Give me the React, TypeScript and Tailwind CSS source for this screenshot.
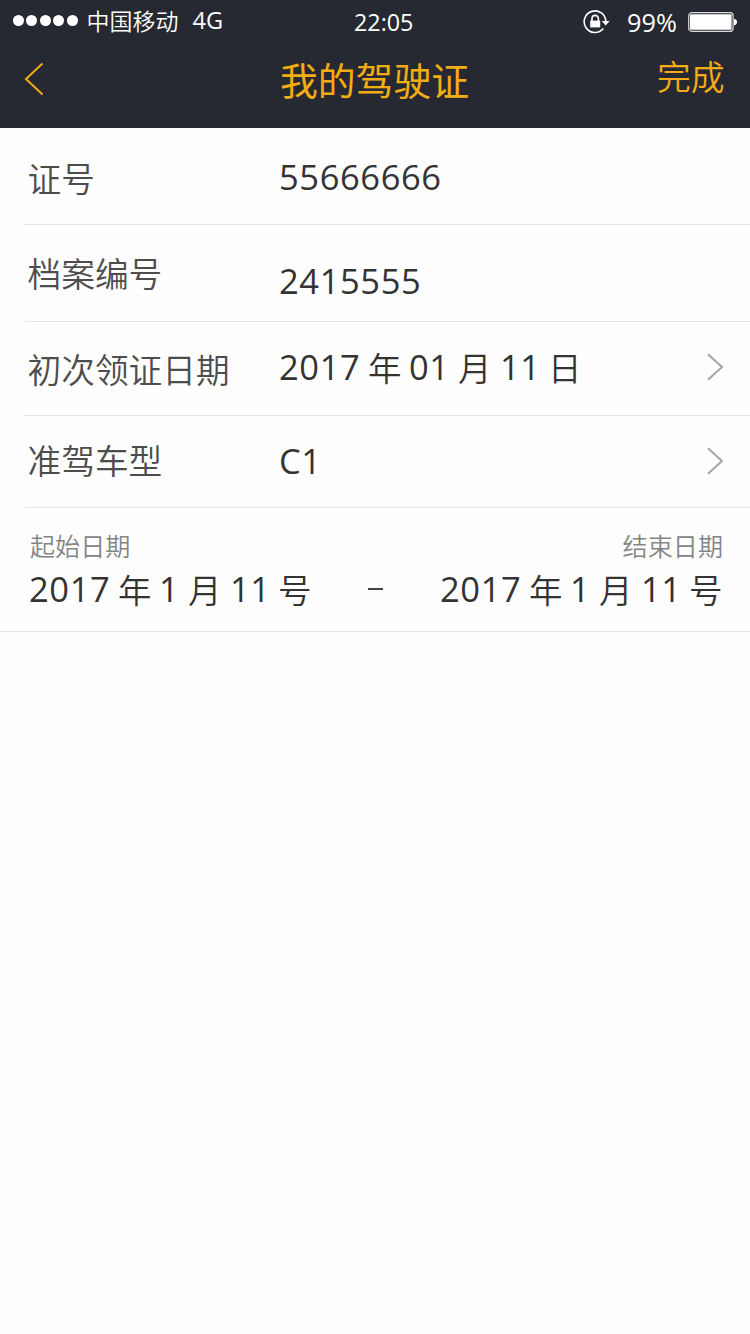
import type { ReactNode } from "react";

const latin = "font-['Open_Sans','Noto_Sans_CJK_SC',sans-serif] font-[370]";
const hanzi = "font-['Noto_Sans_CJK_SC',sans-serif] font-[350]";

function Chevron() {
  return (
    <svg className="ml-auto mr-[26px] h-7 w-[18px]" viewBox="0 0 18 28" fill="none" stroke="#a5a5a5" strokeWidth="2">
      <path d="M2 1.2 16 14 2 26.8" />
    </svg>
  );
}

type RowProps = { label: string; height: string; labelPad: string; valuePad: string; chevronPad?: string; children: ReactNode };

function Row({ label, height, labelPad, valuePad, chevronPad, children }: RowProps) {
  return (
    <div className={`ml-[25px] flex items-start border-b border-[#e3e3e3] ${height}`}>
      <div className={`w-[254px] pl-[2.5px] text-[33.7px] leading-[40px] text-[#4d4d4d] ${hanzi} ${labelPad}`}>{label}</div>
      <div className={`flex text-[34.5px] leading-[40px] tracking-[0.6px] text-[#333] ${latin} ${valuePad}`}>{children}</div>
      {chevronPad && <div className={`ml-auto ${chevronPad}`}><Chevron /></div>}
    </div>
  );
}

function Zh({ children, width }: { children: string; width: string }) {
  return <span className={`text-[33.5px] tracking-normal ${hanzi} ${width}`}>{children}</span>;
}

function PeriodDate() {
  return (
    <div className={`flex text-[34.5px] leading-[40px] tracking-[0.6px] text-[#333] ${latin}`}>
      <span className="w-[89px]">2017</span>
      <Zh width="w-[41px]">年</Zh>
      <span className="w-[29px]">1</span>
      <Zh width="w-[42px]">月</Zh>
      <span className="w-[48px]">11</span>
      <Zh width="w-[34px]">号</Zh>
    </div>
  );
}

export default function App() {
  return (
    <div className="flex h-[1334px] w-[750px] flex-col overflow-hidden bg-[#fefefe]">
      <header className="h-32 bg-[#272932]">
        <div className={`flex h-11 items-center text-white ${latin}`}>
          <div className="flex w-[354px] items-center pb-[4px]">
            <div className="ml-[13px] flex gap-[2.4px]">
              {[0, 1, 2, 3, 4].map((n) => (
                <span key={n} className="size-[11px] rounded-full bg-white" />
              ))}
            </div>
            <span className={`ml-[9px] text-[23px] leading-7 ${hanzi}`}>中国移动</span>
            <span className="ml-[14px] text-[23.5px] leading-7">4G</span>
          </div>
          <span className="w-[229px] text-[23.3px] leading-7">22:05</span>
          <svg className="mb-px h-6 w-7" viewBox="0 0 28 24" fill="none" stroke="white" strokeWidth="1.6">
            <path d="M20.3 18.6A10.8 10.8 0 1 1 22.8 11.5" />
            <path d="M18.8 11h7.8l-3.9 4.4z" fill="white" stroke="none" />
            <path d="M9 11V8.6a3.2 3.2 0 0 1 6.4 0V11" />
            <path d="M7.2 10.6h10v6.8h-10z" fill="white" stroke="none" />
          </svg>
          <span className="ml-4 w-[61px] pb-px text-[25.3px] leading-7">99%</span>
          <svg className="h-[22px] w-[50px]" viewBox="0 0 50 22">
            <rect x="0.7" y="1.7" width="44.4" height="18.6" rx="3" fill="none" stroke="#ddd" strokeWidth="1.2" />
            <rect x="2" y="3.2" width="41.6" height="15.6" rx="1" fill="white" />
            <path d="M46 7.8q3 .5 3 3.3t-3 3.3z" fill="white" />
          </svg>
        </div>
        <div className="flex items-start text-[#f4ac14]">
          <svg className="ml-6 mt-[18px] h-[34px] w-5" viewBox="0 0 20 34" fill="none" stroke="currentColor" strokeWidth="2">
            <path d="M18.5 1.5 2 17 18.5 32.5" />
          </svg>
          <h1 className="ml-[236px] mt-[12px] w-[377px] text-[37.8px] leading-[46px] font-['Noto_Sans_CJK_SC',sans-serif]">我的驾驶证</h1>
          <button className={`mt-[12px] whitespace-nowrap text-[33.8px] leading-[40px] ${hanzi}`}>完成</button>
        </div>
      </header>
      <main>
        <Row label="证号" height="h-[97px]" labelPad="pt-[30px]" valuePad="pt-[29px]">
          <span>55666666</span>
        </Row>
        <Row label="档案编号" height="h-[97px]" labelPad="pt-[28px]" valuePad="pt-[36px]">
          <span>2415555</span>
        </Row>
        <Row label="初次领证日期" height="h-[94px]" labelPad="pt-[27px]" valuePad="pt-[25px]" chevronPad="pt-[31px]">
          <span className="w-[89px]">2017</span>
          <Zh width="w-[41px]">年</Zh>
          <span className="w-[49px]">01</span>
          <Zh width="w-[42px]">月</Zh>
          <span className="w-[48px]">11</span>
          <Zh width="w-[34px]">日</Zh>
        </Row>
        <Row label="准驾车型" height="h-[92px]" labelPad="pt-[24px]" valuePad="pt-[25px]" chevronPad="pt-[31px]">
          <span>C1</span>
        </Row>
        <div className="h-[124px] border-b border-[#e3e3e3] pl-[29px] pr-[27px] pt-[22px]">
          <div className={`flex justify-between pl-[1px] text-[25.1px] leading-[30px] text-[#858585] ${hanzi}`}>
            <span>起始日期</span>
            <span>结束日期</span>
          </div>
          <div className="mt-[9px] flex items-center">
            <PeriodDate />
            <span className="ml-[56px] mr-[57px] h-[2px] w-[15px] bg-[#444]" />
            <PeriodDate />
          </div>
        </div>
      </main>
    </div>
  );
}
